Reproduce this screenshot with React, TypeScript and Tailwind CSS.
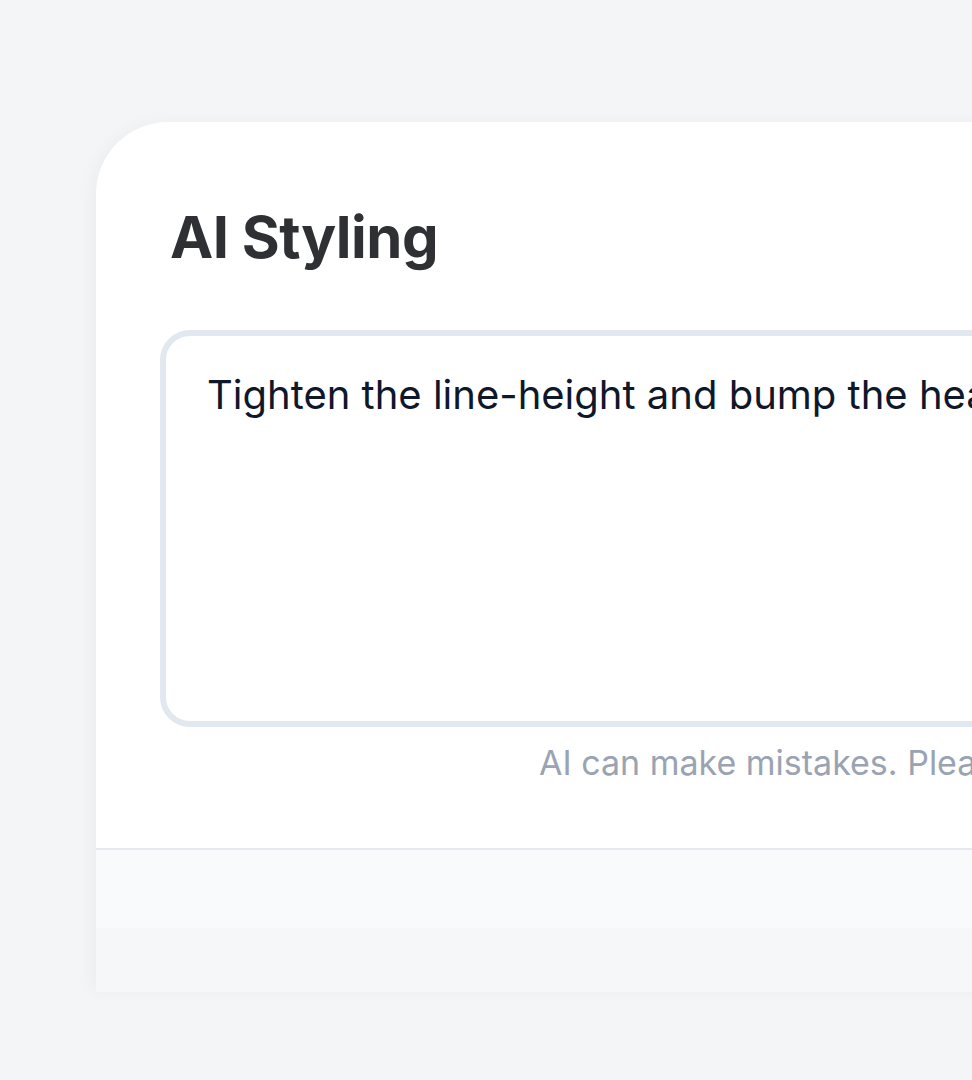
export default function App() {
  return (
    <div className="h-[1080px] w-[972px] overflow-hidden bg-[#f4f5f7] pt-[122px] pl-[96px]">
      <div className="w-[1100px] rounded-tl-[72px] bg-white shadow-[-6px_0_16px_rgba(15,23,42,0.03)]">
        <div className="px-[64px] pt-[86px] pb-[63px]">
          <h1 className="pl-[10px] text-[58px] font-bold leading-none tracking-[-0.5px] text-[#2e3033] [font-family:Inter,'Noto_Sans',sans-serif]">
            AI Styling
          </h1>
          <div className="mt-[64px] h-[397px] rounded-[30px] border-[6px] border-[#e2e8f0] bg-white px-[41px] pt-[34px]">
            <p className="whitespace-nowrap text-[40px] leading-tight text-[#0f172a] [font-family:Inter,sans-serif]">
              Tighten the line-height and bump the heading size a little
            </p>
          </div>
          <p className="mt-[15px] whitespace-nowrap pl-[379px] text-[34px] leading-tight text-[#9aa3b2] [font-family:Inter,sans-serif]">
            AI can make mistakes. Please review the changes.
          </p>
        </div>
        <div className="border-t-2 border-[#e5e9f0]">
          <div className="h-[78px] bg-[#f8fafc]" />
          <div className="h-[64px] bg-[#f6f7f9]" />
        </div>
      </div>
    </div>
  );
}
